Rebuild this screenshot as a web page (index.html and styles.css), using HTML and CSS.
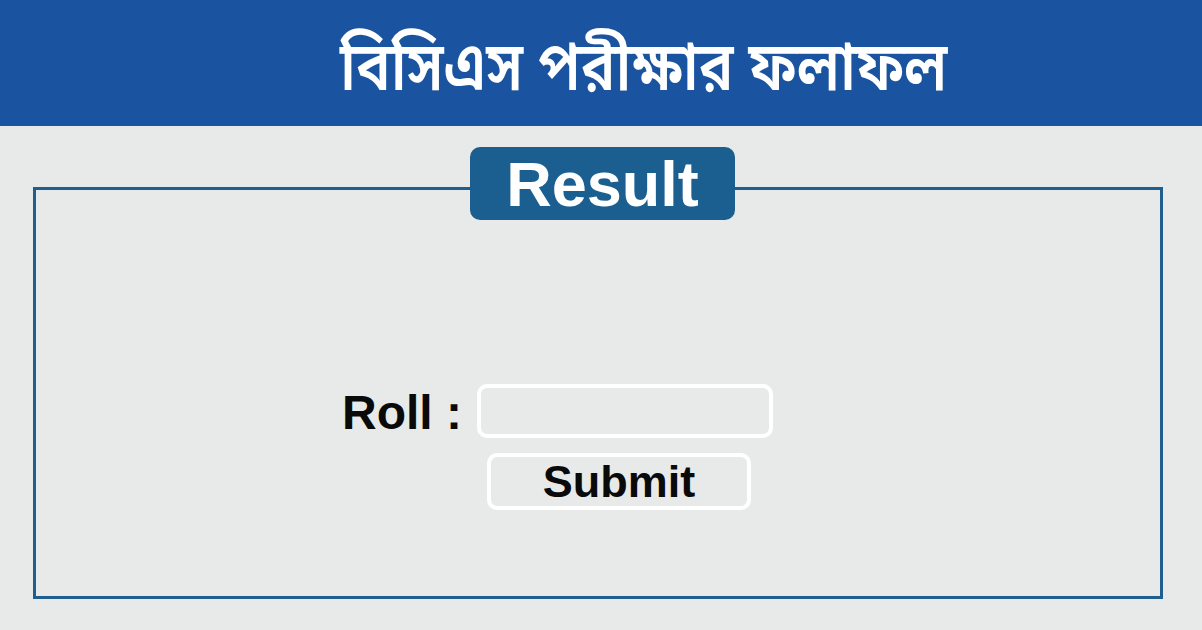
FILE: index.html
```html
<!DOCTYPE html>
<html lang="bn">
<head>
    <meta charset="UTF-8">
    <meta name="viewport" content="width=device-width, initial-scale=1.0">
    <title>BCS Result</title>
    <link rel="stylesheet" href="styles.css">
</head>
<body>
    <header class="topbar">
        <h1 class="title">বিসিএস পরীক্ষার ফলাফল</h1>
    </header>

    <main class="page">
        <section class="panel">
            <div class="badge">Result</div>
            <form class="roll-form" onsubmit="return false;">
                <label class="roll-label" for="roll">Roll :</label>
                <input class="roll-input" type="text" id="roll" name="roll">
                <button class="submit-btn" type="submit">Submit</button>
            </form>
        </section>
    </main>
</body>
</html>
```

FILE: styles.css
```css
body {
    margin: 0;
    background: #e8eae9;
    font-family: "Liberation Sans", Arial, sans-serif;
}
.topbar {
    height: 126px;
    background: #1a53a0;
    display: flex;
    align-items: center;
    padding: 20px 0 0 340px;
    box-sizing: border-box;
}
.title {
    margin: 0;
    color: white;
    font-size: 58px;
    font-weight: 600;
    font-family: "Noto Sans Bengali", "Noto Serif Bengali", "Lohit Bengali", "FreeSans", sans-serif;
    line-height: 1;
    transform: scale(1, 1.18);
    transform-origin: left center;
}
.page {
    padding: 61px 39px 0 33px;
}
.panel {
    position: relative;
    height: 412px;
    border: 3px solid #1f5f8f;
    box-sizing: border-box;
    padding: 194px 0 0 306px;
}
.badge {
    position: absolute;
    left: 434px;
    top: -43px;
    width: 265px;
    height: 73px;
    background: #1b5f91;
    border-radius: 10px;
    color: white;
    font-size: 63px;
    font-weight: bold;
    display: flex;
    align-items: center;
    justify-content: center;
}
.roll-form {
    display: grid;
    grid-template-columns: auto auto;
    justify-content: start;
    column-gap: 15px;
    row-gap: 15px;
}
.roll-label {
    font-size: 48px;
    font-weight: bold;
    color: #0a0a0a;
    align-self: center;
    line-height: 1;
    padding-top: 4px;
}
.roll-input {
    width: 296px;
    height: 54px;
    box-sizing: border-box;
    border: 4px solid white;
    border-radius: 10px;
    background: transparent;
    font-size: 24px;
    padding: 0 12px;
}
.submit-btn {
    grid-column: 2;
    width: 264px;
    height: 57px;
    margin-left: 10px;
    box-sizing: border-box;
    border: 4px solid white;
    border-radius: 10px;
    background: transparent;
    font-family: "Liberation Sans", Arial, sans-serif;
    font-size: 45px;
    font-weight: bold;
    line-height: 1;
    color: #0a0a0a;
    cursor: pointer;
    padding: 0;
}
```
